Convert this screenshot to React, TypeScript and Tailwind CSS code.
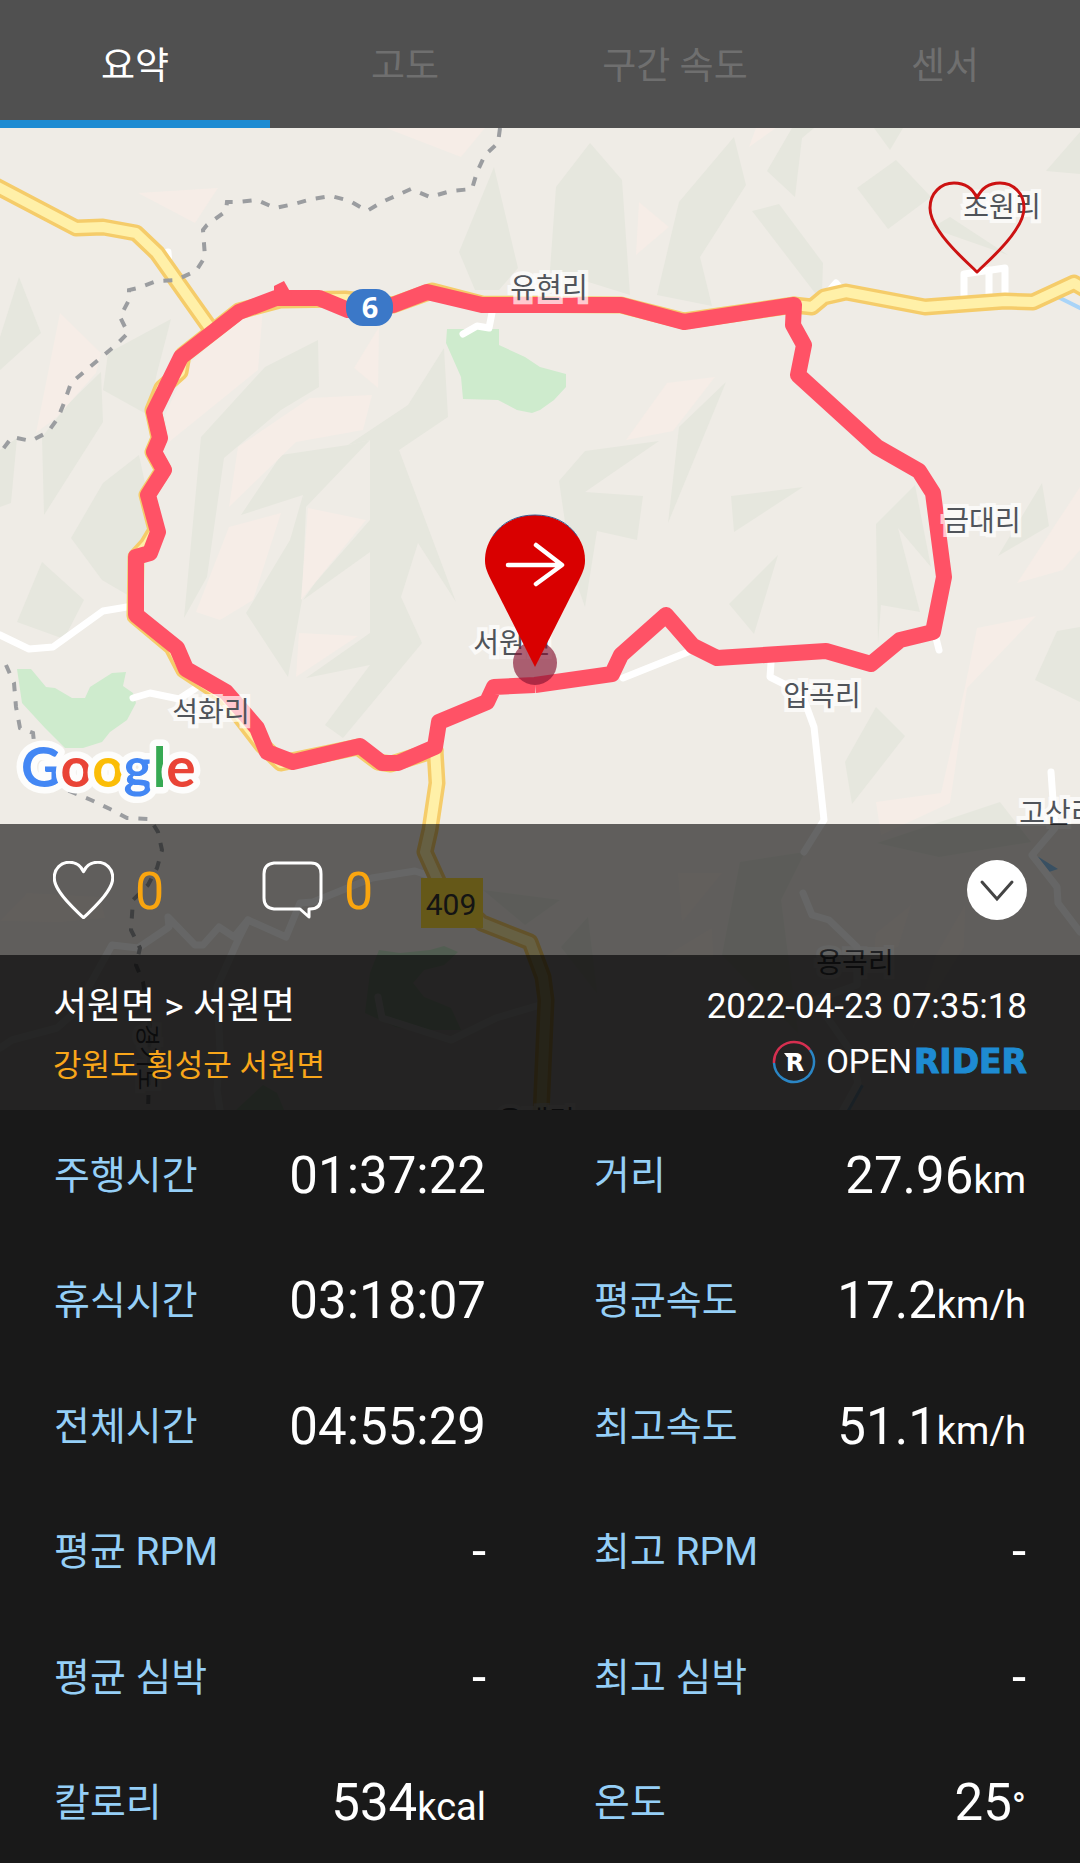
import React from 'react';

const FONT = "font-[Roboto,'Noto_Sans_CJK_KR',sans-serif]";

const tabs = ['요약', '고도', '구간 속도', '센서'];

const stats: { label: string; value: string; unit?: string }[] = [
  { label: '주행시간', value: '01:37:22' },
  { label: '거리', value: '27.96', unit: 'km' },
  { label: '휴식시간', value: '03:18:07' },
  { label: '평균속도', value: '17.2', unit: 'km/h' },
  { label: '전체시간', value: '04:55:29' },
  { label: '최고속도', value: '51.1', unit: 'km/h' },
  { label: '평균 RPM', value: '-' },
  { label: '최고 RPM', value: '-' },
  { label: '평균 심박', value: '-' },
  { label: '최고 심박', value: '-' },
  { label: '칼로리', value: '534', unit: 'kcal' },
  { label: '온도', value: '25', unit: '°' },
];

const ridges = [
  '19,277 41,333 0,370 0,337',
  '171,319 157,373 148,415 103,390 108,353',
  '101,372 103,422 44,515 42,437 69,403',
  '0,450 17,438 11,503 0,507',
  '139,455 148,497 152,540 131,597 102,580 71,538 103,483',
  '42,562 84,600 64,639 17,622',
  '318,340 319,387 281,410 224,458 207,577 184,618 201,437 265,367',
  '444,348 448,417 399,450 456,602 418,543 401,597 422,643 343,738 325,725 370,665 306,678 370,633 370,440 348,445 408,405',
  '370,440 305,508 303,495 241,515 281,455 348,445',
  '303,495 306,508 302,600 288,677 246,613 290,540',
  '370,520 370,552 303,600 315,583',
  '494,167 518,268 499,290 475,290 459,252',
  '590,143 622,180 630,295 550,270 556,187',
  '734,137 746,185 700,257 712,306 657,295 679,202',
  '792,128 814,128 802,138 795,197 767,171',
  '779,204 823,263 822,293 815,293 752,211',
  '874,128 903,128 890,150',
  '896,160 931,197 888,229 857,188',
  '950,217 1008,255 931,228',
  '1080,132 1080,174 1046,171',
  '726,382 668,523 679,427',
  '585,451 659,441 585,492 643,496 637,540 597,531 585,607 572,570 559,481',
  '731,496 803,487 734,532',
  '778,555 754,634 729,604',
  '915,485 931,567 898,528 920,612 881,605 878,643 876,524',
  '1042,483 1049,526 998,556',
  '876,707 905,736 852,804 845,762',
  '1080,627 1080,702 1035,680 1057,631',
  '1000,802 1031,842 939,857 877,843',
  '805,852 781,900 798,1033 722,955 740,862',
  '588,917 597,993 561,947',
  '483,890 560,900 525,925',
];

const slopes = [
  '386,128 485,128 461,157',
  '138,193 218,188 195,223',
  '379,327 378,388 354,368',
  '60,313 101,353 96,373 57,417 36,433',
  '263,307 258,370 169,442 165,415 188,365 241,317',
  '372,395 363,430 296,442 229,507 238,447 310,398',
  '281,513 253,600 220,620 196,612 229,527',
  '308,508 366,520 301,600',
  '299,633 358,636 296,677',
  '639,202 669,227 636,255',
  '756,128 776,128 749,147',
  '715,377 673,431 626,440 667,383',
  '1080,487 1080,550 1063,570 1017,583',
  '1036,616 967,688 950,803 881,835 876,802 941,793 965,687 977,628',
  '678,873 722,873 682,922',
  '712,928 713,957 664,957',
  '911,905 898,947 874,953 876,933',
  '965,905 964,947 912,1030 936,955',
  '27,893 100,897 105,918 60,922 0,921',
];

const parks = [
  '447,329 499,329 499,345 525,357 540,367 566,374 566,387 554,400 540,410 532,413 517,410 498,400 463,399 461,377 446,343',
  '17,669 31,669 46,687 55,688 72,698 85,698 90,687 112,673 126,672 123,686 133,693 136,703 127,720 110,732 102,742 83,748 65,748 45,728 22,703',
  '379,950 400,953 430,950 444,946 458,952 444,965 424,970 413,983 424,997 451,1008 461,1030 413,1030 396,1027 365,1013 370,973',
  '263,1085 277,1093 284,1110 236,1110',
];

const lanes = [
  '0,635 29,649 53,647 103,611 127,607',
  '133,698 150,693 179,699 196,688',
  '168,252 169,266',
  '463,334 477,326 489,328 492,313',
  '830,290 836,283 842,290',
  '964,299 964,274 1005,268 1005,299',
  '989,270 989,299',
  '623,678 688,652',
  '771,663 770,677 786,685 803,697 814,727 824,820 804,852',
  '936,638 939,650',
  '1051,772 1055,828 1032,855 1057,887 1058,903 1080,932',
  '803,893 812,915 829,920 857,947 857,985 815,1000 850,1050 858,1083 843,1110',
  '0,1048 12,1040 57,1028 74,1013 112,945 138,948 169,927 168,917 195,945 203,945 219,927 234,937 248,920 286,937 300,903 313,902 372,878 415,871 427,875',
  '248,920 238,940 217,987 220,1050 217,1090 220,1110',
  '378,997 382,1018 451,1040 496,1018 540,1005',
];

const highways = [
  '-6,185 76,228 103,227 136,233 157,253 210,328',
  '794,305 812,307 824,297 846,292 925,307 1005,301 1033,302 1074,283 1086,290',
  '435,750 437,783 430,830 425,852 439,883 482,923 530,942 543,977 546,1000 541,1114',
  '435,750 391,764 378,762 358,747 281,763 262,745 225,697 184,670 172,647 135,616 136,557 147,545 156,530 147,495 163,470 153,452 159,438 153,410 162,388 180,372 183,355 239,311 280,300 345,299 393,305 432,291 482,304 621,305 684,321 794,305',
];

const borders = [
  '500,128 498,143 485,155 477,172 472,189 451,191 430,197 411,189 382,202 367,211 350,201 331,196 312,199 294,204 275,208 257,200 238,202 227,202 226,211 207,225 203,230 205,257 196,271 176,280 157,281 138,288 129,290 129,300 120,317 128,333 117,344 71,383 64,403 58,418 48,432 31,441 12,437 0,453',
  '6,665 14,683 16,707 20,728 33,733 36,760 56,785 74,793 91,800 110,809 127,818 150,819 158,832 162,850 157,868 148,885 133,900 131,930 140,948 136,965 143,982 150,1027 148,1114',
];

const route =
  '535,685 494,687 487,702 439,722 435,747 398,763 382,763 360,746 293,762 267,752 257,728 226,692 186,669 177,648 136,615 136,557 150,553 158,532 148,495 164,470 154,452 160,438 154,412 181,357 239,312 276,298 319,298 348,310 393,305 427,292 482,305 621,305 684,322 794,305 793,325 804,345 798,375 877,447 919,471 933,493 944,577 933,632 900,640 871,664 826,651 717,658 693,646 666,615 621,655 612,674 535,685';

const places: [string, number, number][] = [
  ['유현리', 549, 298],
  ['초원리', 1002, 217],
  ['금대리', 982, 531],
  ['압곡리', 822, 706],
  ['석화리', 211, 722],
  ['서원면', 512, 653],
  ['고산리', 1058, 823],
  ['용곡리', 855, 973],
  ['옥대리', 536, 1131],
];

function RouteMap() {
  return (
    <svg
      className="absolute inset-0 h-full w-full"
      viewBox="0 128 1080 982"
      preserveAspectRatio="xMidYMid slice"
      role="img"
      aria-label="주행 경로 지도"
    >
      <rect x="0" y="128" width="1080" height="982" fill="#efece6" />
      {ridges.map((p) => <polygon key={p} points={p} fill="#e6e7de" />)}
      {slopes.map((p) => <polygon key={p} points={p} fill="#f6ede7" />)}
      {parks.map((p) => (
        <polygon key={p} points={p} fill="#ceebcd" strokeLinejoin="round" />
      ))}
      <path d="M1037 856L1058 869L1049 872Z" fill="#8fc7f5" />
      <path d="M1058 297L1082 309" stroke="#a8d4f8" strokeWidth="4" />
      <path d="M862 1085L847 1112" stroke="#a8d4f8" strokeWidth="4" />
      <g fill="none" strokeLinejoin="round" strokeLinecap="round">
        {lanes.map((p) => <polyline key={p} points={p} stroke="#fff" strokeWidth="7" />)}
        {highways.map((p) => <polyline key={p} points={p} stroke="#f5cc6a" strokeWidth="17" />)}
        {highways.map((p) => <polyline key={p} points={p} stroke="#fff0a8" strokeWidth="10" />)}
      </g>
      <g fill="none" stroke="#9b9da0" strokeWidth="4" strokeDasharray="9 10">
        {borders.map((p) => <polyline key={p} points={p} />)}
      </g>
      <g fill="none" stroke="#ff5266" strokeWidth="16" strokeLinejoin="round">
        <polyline points={route} />
        <path d="M274 286L284 281L292 295L290 304H274Z" fill="#ff5266" stroke="none" />
      </g>
      <rect x="346" y="289" width="47" height="37" rx="17" fill="#3b78c8" />
      <text x="370" y="318" textAnchor="middle" className="font-['Noto_Sans',sans-serif] text-[29px] font-bold" fill="#fff">6</text>
      <rect x="421" y="878" width="62" height="50" fill="#fcdc3c" />
      <text x="451" y="915" textAnchor="middle" className="font-[Roboto,sans-serif] text-[30px]" fill="#333">409</text>
      <g
        className="font-['Noto_Sans_CJK_KR',sans-serif] text-[28px]"
        textAnchor="middle"
        fill="#50545a"
        stroke="#fff"
        strokeOpacity="0.7"
        strokeWidth="8"
        paintOrder="stroke"
      >
        {places.map(([name, x, y]) => <text key={name} x={x} y={y}>{name}</text>)}
        <text transform="translate(139 1024) rotate(90)" textAnchor="start" className="text-[24px]">경기도</text>
      </g>
      <text
        x="21"
        y="787"
        className="font-[Lato,sans-serif] text-[55px] font-bold"
        stroke="#fdfdfc"
        strokeWidth="13"
        strokeLinejoin="round"
        paintOrder="stroke"
        aria-label="Google"
      >
        <tspan fill="#4387f4">G</tspan>
        <tspan fill="#e94436">o</tspan>
        <tspan fill="#fbbd06">o</tspan>
        <tspan fill="#4387f4">g</tspan>
        <tspan fill="#36a952">l</tspan>
        <tspan fill="#e94436">e</tspan>
      </text>
      <circle cx="535" cy="663" r="22" fill="#861432" fillOpacity="0.66" />
      <path d="M535 667L491 580C486 570 485 566 485 560C485 535 507 515 535 515C563 515 585 535 585 560C585 566 584 570 579 580Z" fill="#d90000" />
      <path d="M493 536C502 522 517 515 535 515C553 515 568 522 577 536" fill="none" stroke="#3a5f95" strokeWidth="1" />
      <path d="M508 565H561M536 545L562 565L536 584" fill="none" stroke="#fff" strokeWidth="4.5" strokeLinecap="round" strokeLinejoin="round" />
    </svg>
  );
}

function HeartShape({ strokeWidth }: { strokeWidth: number }) {
  return (
    <path
      d="M49 91C39 81 22 67 11 50C4 40 2 34 2 27C2 12 13 2 26 2C37 2 45 8 49 17C53 8 61 2 72 2C85 2 96 12 96 27C96 34 94 40 87 50C76 67 59 81 49 91Z"
      fill="none"
      stroke="currentColor"
      strokeWidth={strokeWidth}
      strokeLinejoin="round"
    />
  );
}

function Brand() {
  return (
    <div className="flex items-center text-[33px] leading-[44px]" aria-label="OPENRIDER">
      <svg viewBox="0 0 44 44" className="mr-[10px] h-[44px] w-[44px]" aria-hidden="true">
        <path d="M2 23A20 20 0 0 1 38 10" fill="none" stroke="#d62f50" strokeWidth="2.5" />
        <path d="M38 10A20 20 0 1 1 2 23" fill="none" stroke="#2b86c5" strokeWidth="2.5" />
        <path d="M12 13H20V17H15Z" fill="#fff" />
        <text x="23" y="31" textAnchor="middle" className="font-['DejaVu_Sans',sans-serif] text-[24px] font-bold" fill="#fff">R</text>
      </svg>
      <span className="mr-0.5">OPEN</span>
      <span className="font-['DejaVu_Sans',sans-serif] font-bold text-[#1e8bd2] [-webkit-text-stroke:1px_#1e8bd2]">RIDER</span>
    </div>
  );
}

export default function App() {
  return (
    <div className={`flex min-h-screen flex-col bg-[#191919] text-white ${FONT}`}>
      <nav className="grid h-32 shrink-0 grid-cols-4 bg-[#505050]" role="tablist">
        {tabs.map((tab, i) => (
          <button
            key={tab}
            type="button"
            role="tab"
            aria-selected={i === 0}
            className={
              i === 0
                ? 'border-b-8 border-[#1e8bd2] pt-3.5 text-[37px] text-white'
                : 'border-b-8 border-transparent pt-3.5 text-[37px] text-[#6f6f6f]'
            }
          >
            {tab}
          </button>
        ))}
      </nav>

      <section className="relative overflow-hidden">
        <RouteMap />
        <div className="relative flex h-[696px] items-start justify-end px-[54px] pt-[53px]">
          <button type="button" aria-label="좋아요" className="text-[#cc1212]">
            <svg viewBox="0 0 98 93" className="h-[93px] w-[98px]"><HeartShape strokeWidth={3} /></svg>
          </button>
        </div>

        <div className="relative flex h-[131px] items-center bg-black/60 px-[53px]">
          <button type="button" aria-label="좋아요 0" className="flex w-[209px] items-center gap-[21px] text-[52px] leading-none">
            <svg viewBox="0 0 98 93" className="h-[58px] w-[61px]"><HeartShape strokeWidth={5} /></svg>
            <span className="pt-1 text-[#f9a50f]">0</span>
          </button>
          <button type="button" aria-label="댓글 0" className="flex items-center gap-[21px] text-[52px] leading-none">
            <svg viewBox="0 0 61 58" className="h-[58px] w-[61px]" fill="none" stroke="currentColor" strokeWidth="3" strokeLinejoin="round">
              <path d="M12 2H49Q59 2 59 13V37Q59 48 48 48H47V56L38 48H12Q2 47 2 37V13Q2 3 12 2Z" />
            </svg>
            <span className="pt-1 text-[#f9a50f]">0</span>
          </button>
          <button type="button" aria-label="접기" className="ml-auto flex h-[60px] w-[60px] items-center justify-center rounded-full bg-white text-[#444]">
            <svg viewBox="0 0 60 60" className="h-[60px] w-[60px]" fill="none" stroke="currentColor" strokeWidth="3" strokeLinecap="round">
              <path d="M15 22L30 39L45 22" />
            </svg>
          </button>
        </div>

        <div className="relative flex h-[155px] flex-col bg-black/85 px-[53px] pt-[27px]">
          <div className="flex items-center justify-between leading-[50px]">
            <h1 className="text-[37px]">서원면 &gt; 서원면</h1>
            <time dateTime="2022-04-23T07:35:18" className="text-[35px]">2022-04-23 07:35:18</time>
          </div>
          <div className="flex h-[60px] items-center justify-between">
            <p className="pt-2 text-[31px]">
              <span className="text-[#f9a61a]">강원도 횡성군 서원면</span>
            </p>
            <Brand />
          </div>
        </div>
      </section>

      <dl className="grid flex-1 grid-cols-2 grid-rows-6">
        {stats.map((s) => (
          <div key={s.label} className="flex items-center justify-between px-[54px] pt-1.5">
            <dt className="text-[39px] text-[#95cff7]">{s.label}</dt>
            <dd className="text-[51px]">
              {s.value}
              {s.unit && <span className="text-[38px]">{s.unit}</span>}
            </dd>
          </div>
        ))}
      </dl>
    </div>
  );
}
